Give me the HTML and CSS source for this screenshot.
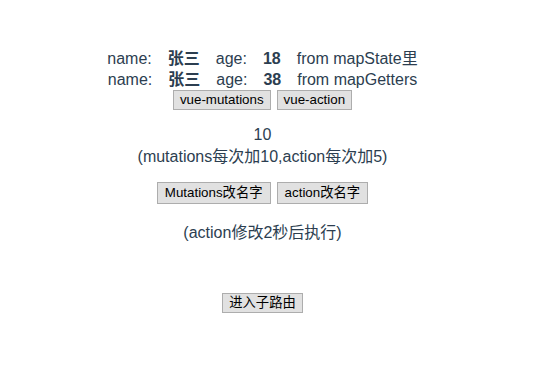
FILE: index.html
```html
<html>
<head>
<title>vuex demo</title>
<link rel="stylesheet" href="styles.css">
</head>
<body>
<div id="app">
  <div class="info">
    <span class="label">name:</span><b class="val">张三</b><span class="label">age:</span><b class="val">18</b><span class="label">from mapState里</span>
  </div>
  <div class="info">
    <span class="label">name:</span><b class="val">张三</b><span class="label">age:</span><b class="val">38</b><span class="label">from mapGetters</span>
  </div>
  <div class="btns">
    <button>vue-mutations</button>
    <button>vue-action</button>
  </div>
  <p class="count">10<br>(mutations每次加10,action每次加5)</p>
  <div class="btns rename">
    <button>Mutations改名字</button>
    <button>action改名字</button>
  </div>
  <p class="note">(action修改2秒后执行)</p>
  <div class="btns child">
    <button>进入子路由</button>
  </div>
</div>
</body>
</html>
```

FILE: styles.css
```css
body { margin: 8px; }
#app {
  font-family: Arial, "Liberation Sans", "Noto Sans CJK SC", sans-serif;
  font-size: 16px;
  color: #2c3e50;
  text-align: center;
  margin: 40px 23px 0 0;
}
.info { line-height: 21px; }
.info .label { margin: 0 8px; }
.info .val { margin: 0 8px; }
.btns { display: flex; justify-content: center; gap: 6px; }
button {
  font-family: Arial, "Liberation Sans", "Noto Sans CJK SC", sans-serif;
  font-size: 13.33px;
  line-height: 16px;
  color: #000;
  background: #e1e1e1;
  border: 1px solid #adadad;
  padding: 1px 6px;
  margin: 0;
}
.count { margin: 14px 0 0; line-height: 22px; }
.rename { margin-top: 14px; }
.rename button { padding: 2px 7px; }
.note { margin: 18px 0 0; line-height: 22px; }
.child { margin-top: 49px; }
```
